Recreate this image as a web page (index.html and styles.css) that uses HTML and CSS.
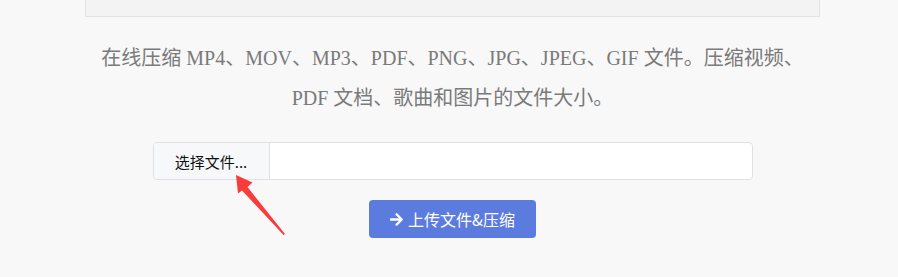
FILE: index.html
```html
<!DOCTYPE html>
<html lang="zh">
<head>
<meta charset="utf-8">
<link rel="stylesheet" href="styles.css">
</head>
<body>
<div class="wrap">
  <div class="topbox"></div>
  <p class="desc">在线压缩 MP4、MOV、MP3、PDF、PNG、JPG、JPEG、GIF 文件。压缩视频、PDF 文档、歌曲和图片的文件大小。</p>
  <div class="file-group">
    <span class="file-btn">选择文件...</span>
    <span class="file-name"></span>
  </div>
  <div class="actions">
    <button class="upload">
      <svg class="ico" viewBox="0 0 448 512" width="13" height="15"><path fill="#fff" d="M190.5 66.9l22.2-22.2c9.4-9.4 24.6-9.4 33.9 0L441 239c9.4 9.4 9.4 24.6 0 33.9L246.6 467.3c-9.4 9.4-24.6 9.4-33.9 0l-22.2-22.2c-9.5-9.5-9.3-25 .4-34.3L311.4 296H24c-13.3 0-24-10.7-24-24v-32c0-13.3 10.7-24 24-24h287.4L190.9 101.2c-9.8-9.3-10-24.8-.4-34.3z"/></svg>
      <span>上传文件&amp;压缩</span>
    </button>
  </div>
</div>
<svg class="pointer" width="898" height="277" viewBox="0 0 898 277">
  <path fill="#fb3b3b" d="M236 175 L252.5 182.5 L247.5 187 L285 234 L283.5 235 L242 190.5 L238 193.5 Z"/>
</svg>
</body>
</html>
```
FILE: styles.css
```css
html, body {
  margin: 0;
  padding: 0;
  background: #f8f8f8;
}
body {
  width: 898px;
  height: 277px;
  overflow: hidden;
  position: relative;
}
.wrap {
  margin-left: 85px;
  width: 735px;
}
.topbox {
  height: 16px;
  background: #f3f3f3;
  border: 1px solid #e3e3e3;
  border-top: none;
}
.desc {
  margin: 21px 0 0;
  padding: 0;
  text-align: center;
  font-family: "Liberation Serif", "Noto Sans CJK SC", serif;
  font-size: 20px;
  line-height: 40px;
  color: #7a7a7a;
}
.file-group {
  width: 600px;
  height: 38px;
  margin: 24px auto 0;
  display: flex;
  box-sizing: border-box;
  border: 1px solid #dfe1e5;
  border-radius: 4px;
  background: #fff;
  overflow: hidden;
}
.file-btn {
  width: 116px;
  box-sizing: border-box;
  border-right: 1px solid #dfe1e5;
  background: #f7f8fa;
  display: flex;
  align-items: center;
  justify-content: center;
  font-family: "Noto Sans CJK SC", sans-serif;
  font-size: 15px;
  color: #111;
}
.file-name {
  flex: 1;
}
.actions {
  display: flex;
  justify-content: center;
  margin-top: 20px;
}
.upload {
  width: 167px;
  height: 38px;
  border: none;
  border-radius: 4px;
  background: #5c7bde;
  color: #fff;
  font-family: "Noto Sans CJK SC", sans-serif;
  font-size: 16px;
  display: flex;
  align-items: center;
  justify-content: center;
  gap: 5px;
  padding: 0;
}
.ico {
  display: block;
}
.pointer {
  position: absolute;
  left: 0;
  top: 0;
  pointer-events: none;
}
```
